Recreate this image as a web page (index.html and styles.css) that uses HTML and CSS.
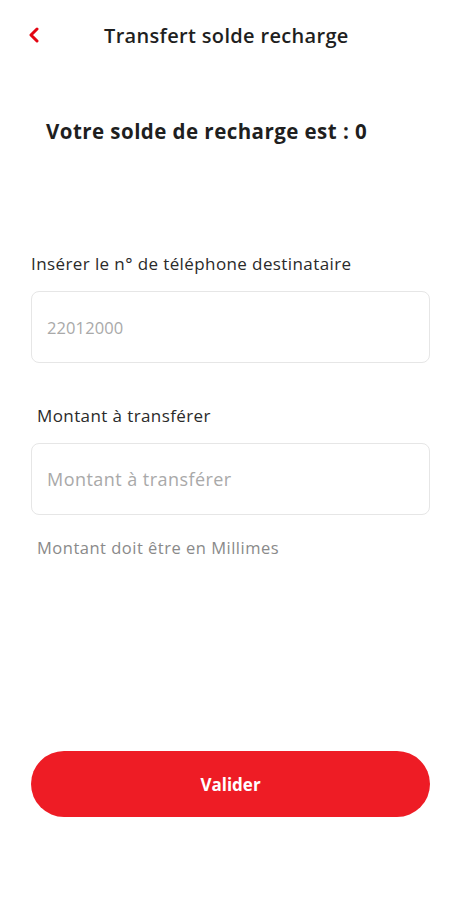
FILE: index.html
```html
<!DOCTYPE html>
<html lang="fr">
<head>
    <meta charset="UTF-8">
    <meta name="viewport" content="width=device-width, initial-scale=1.0">
    <title>Transfert solde recharge</title>
    <link rel="stylesheet" href="styles.css">
</head>
<body>
    <div class="screen">
        <header class="topbar">
            <span class="back">
                <svg width="12" height="16" viewBox="0 0 12 16">
                    <path d="M9 2 L3 8 L9 14" fill="none" stroke="#e30613" stroke-width="3" stroke-linecap="round" stroke-linejoin="round"/>
                </svg>
            </span>
            <h1 class="title">Transfert solde recharge</h1>
        </header>

        <p class="balance">Votre solde de recharge est : 0</p>

        <div class="form">
            <label class="label first">Insérer le n° de téléphone destinataire</label>
            <div class="field"><span class="placeholder digits">22012000</span></div>

            <label class="label second">Montant à transférer</label>
            <div class="field"><span class="placeholder">Montant à transférer</span></div>

            <p class="hint">Montant doit être en Millimes</p>
        </div>

        <button class="submit">Valider</button>
    </div>
</body>
</html>
```

FILE: styles.css
```css
body {
    margin: 0;
    background: #fff;
    font-family: "Open Sans", Arial, sans-serif;
    color: #1f1f1f;
}

.screen {
    width: 457px;
    height: 900px;
    display: flex;
    flex-direction: column;
}

.topbar {
    display: flex;
    align-items: center;
    height: 70px;
    padding-left: 28px;
}

.back {
    display: flex;
    width: 12px;
}

.title {
    margin: 0 0 0 64px;
    font-size: 20px;
    font-weight: 600;
    letter-spacing: 0.33px;
    color: #1f1f1f;
}

.balance {
    margin: 47px 0 0 46px;
    font-size: 20.5px;
    line-height: 28px;
    font-weight: 700;
    letter-spacing: 0.45px;
    color: #1f1f1f;
}

.form {
    display: flex;
    flex-direction: column;
    padding: 0 27px 0 31px;
    margin-top: 107px;
}

.label {
    font-size: 17px;
    line-height: 23px;
    letter-spacing: 0.4px;
    color: #2a2a2a;
}

.label.second {
    margin: 41px 0 0 6px;
    font-weight: 500;
}

.field {
    box-sizing: border-box;
    height: 72px;
    margin-top: 16px;
    border: 1px solid #e6e6e6;
    border-radius: 8px;
    display: flex;
    align-items: center;
    padding-left: 15px;
}

.placeholder {
    font-size: 18px;
    letter-spacing: 0.45px;
    color: #a9a9a9;
}

.placeholder.digits {
    font-size: 16.5px;
    letter-spacing: 0.1px;
}

.hint {
    margin: 22px 0 0 6px;
    font-size: 16.5px;
    line-height: 22px;
    letter-spacing: 0.5px;
    color: #8a8a8a;
}

.submit {
    margin: auto 27px 83px 31px;
    height: 66px;
    border: none;
    border-radius: 33px;
    background: #ee1c25;
    color: #fff;
    font-family: "Open Sans", Arial, sans-serif;
    font-size: 17px;
    font-weight: 700;
}
```
